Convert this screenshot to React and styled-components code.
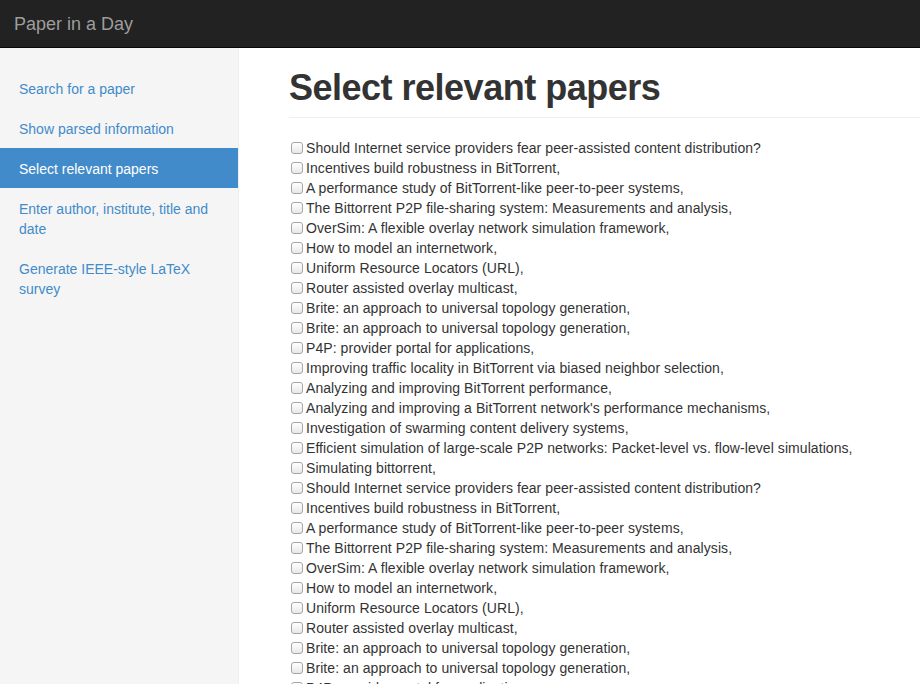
import React from 'react'
import styled, { createGlobalStyle } from 'styled-components'

const titles = [
  'Should Internet service providers fear peer-assisted content distribution?',
  'Incentives build robustness in BitTorrent,',
  'A performance study of BitTorrent-like peer-to-peer systems,',
  'The Bittorrent P2P file-sharing system: Measurements and analysis,',
  'OverSim: A flexible overlay network simulation framework,',
  'How to model an internetwork,',
  'Uniform Resource Locators (URL),',
  'Router assisted overlay multicast,',
  'Brite: an approach to universal topology generation,',
  'Brite: an approach to universal topology generation,',
  'P4P: provider portal for applications,',
  'Improving traffic locality in BitTorrent via biased neighbor selection,',
  'Analyzing and improving BitTorrent performance,',
  "Analyzing and improving a BitTorrent network's performance mechanisms,",
  'Investigation of swarming content delivery systems,',
  'Efficient simulation of large-scale P2P networks: Packet-level vs. flow-level simulations,',
  'Simulating bittorrent,',
]

const papers = [...titles, ...titles]

const navItems = [
  'Search for a paper',
  'Show parsed information',
  'Select relevant papers',
  'Enter author, institute, title and date',
  'Generate IEEE-style LaTeX survey',
]

export default function App() {
  return (
    <>
      <Global />
      <Navbar>
        <Brand href="#">Paper in a Day</Brand>
      </Navbar>
      <Layout>
        <Sidebar>
          {navItems.map((item) => (
            <NavLink key={item} href="#" $active={item === 'Select relevant papers'}>
              {item}
            </NavLink>
          ))}
        </Sidebar>
        <Main>
          <PageHeader>Select relevant papers</PageHeader>
          <PaperList>
            {papers.map((p, i) => (
              <PaperRow key={i}>
                <Check type="checkbox" />
                {p}
              </PaperRow>
            ))}
          </PaperList>
        </Main>
      </Layout>
    </>
  )
}

const Global = createGlobalStyle`
  body {
    margin: 0;
    font-family: "Liberation Sans", Arial, sans-serif;
    font-size: 14px;
    line-height: 20px;
    color: #333;
    background: #fff;
  }
`

const Navbar = styled.div`
  height: 47px;
  background: #222;
  border-bottom: 1px solid #080808;
  display: flex;
  align-items: center;
  padding-left: 14px;
`

const Brand = styled.a`
  color: #9d9d9d;
  font-size: 18px;
  text-decoration: none;
`

const Layout = styled.div`
  display: flex;
  min-height: calc(100vh - 48px);
`

const Sidebar = styled.div`
  width: 238px;
  flex-shrink: 0;
  background: #f5f5f5;
  border-right: 1px solid #eee;
  padding-top: 20px;
  display: flex;
  flex-direction: column;
`

const NavLink = styled.a`
  display: block;
  padding: 11px 20px 9px 19px;
  color: ${(p) => (p.$active ? '#fff' : '#428bca')};
  background: ${(p) => (p.$active ? '#428bca' : 'transparent')};
  text-decoration: none;
`

const Main = styled.div`
  flex: 1;
  padding: 20px 0 0 50px;
`

const PageHeader = styled.h1`
  margin: 0 0 20px;
  padding-bottom: 9px;
  border-bottom: 1px solid #eee;
  font-size: 36px;
  font-weight: 700;
  line-height: 40px;
  letter-spacing: -0.5px;
  color: #333;
`

const PaperList = styled.div`
  display: flex;
  flex-direction: column;
`

const PaperRow = styled.label`
  display: flex;
  align-items: center;
  white-space: nowrap;
  height: 20px;
  padding-left: 2px;
  letter-spacing: 0.07px;
`

const Check = styled.input`
  appearance: none;
  box-sizing: border-box;
  margin: 0 3px 0 0;
  width: 12px;
  height: 12px;
  border: 1px solid #a6a6a6;
  border-radius: 3px;
  background: linear-gradient(#fff, #e8e8e8);
  flex-shrink: 0;
`
